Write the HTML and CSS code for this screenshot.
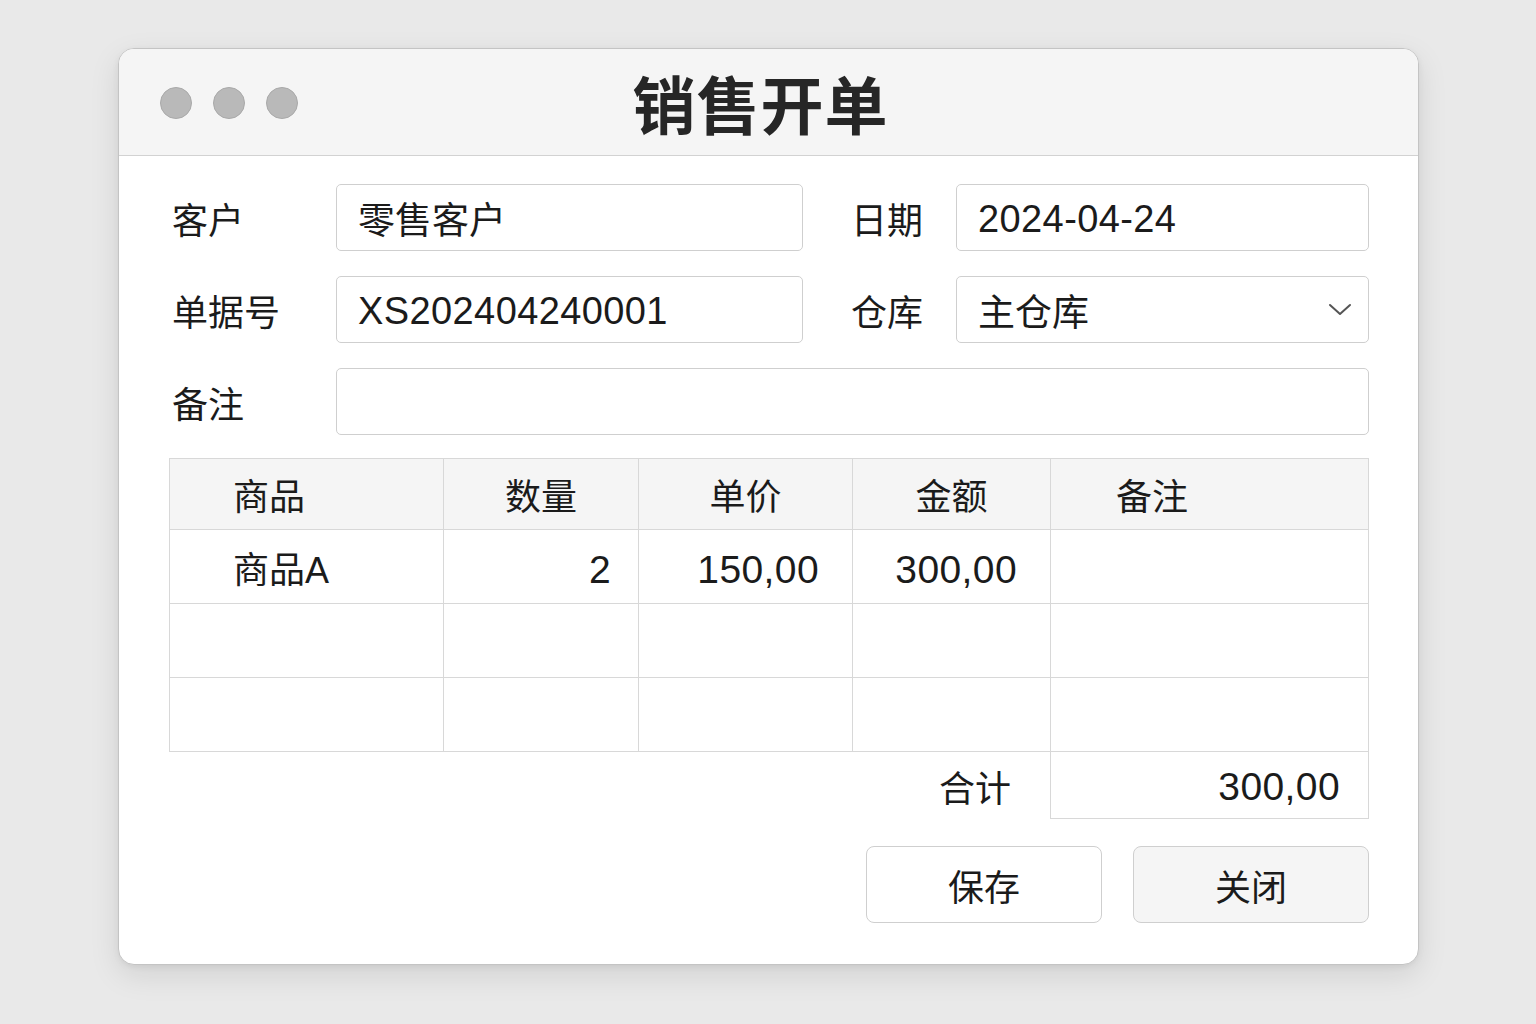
FILE: index.html
```html
<!DOCTYPE html>
<html lang="zh-CN">
<head>
<meta charset="utf-8">
<title>销售开单</title>
<link rel="stylesheet" href="styles.css">
</head>
<body>
<div class="window">
  <div class="titlebar">
    <div class="dots"><span class="dot"></span><span class="dot"></span><span class="dot"></span></div>
    <div class="title">销售开单</div>
  </div>
  <div class="content">
    <div class="form">
      <div class="label">客户</div>
      <div class="field">零售客户</div>
      <div class="spacer"></div>
      <div class="label">日期</div>
      <div class="field latin">2024-04-24</div>

      <div class="label">单据号</div>
      <div class="field latin">XS202404240001</div>
      <div class="spacer"></div>
      <div class="label">仓库</div>
      <div class="field select">主仓库
        <svg class="chev" width="24" height="14" viewBox="0 0 24 14"><path d="M2 2 L12 11 L22 2" fill="none" stroke="#555" stroke-width="2" stroke-linecap="round" stroke-linejoin="round"/></svg>
      </div>

      <div class="label">备注</div>
      <div class="field wide"></div>
    </div>

    <table class="grid">
      <colgroup>
        <col class="c1"><col class="c2"><col class="c3"><col class="c4"><col class="c5">
      </colgroup>
      <thead>
        <tr>
          <th class="left">商品</th>
          <th>数量</th>
          <th>单价</th>
          <th>金额</th>
          <th class="left">备注</th>
        </tr>
      </thead>
      <tbody>
        <tr>
          <td class="left">商品A</td>
          <td class="num n2">2</td>
          <td class="num">150,00</td>
          <td class="num">300,00</td>
          <td></td>
        </tr>
        <tr><td></td><td></td><td></td><td></td><td></td></tr>
        <tr><td></td><td></td><td></td><td></td><td></td></tr>
      </tbody>
    </table>

    <div class="total">
      <div class="total-label">合计</div>
      <div class="total-value">300,00</div>
    </div>

    <div class="buttons">
      <button class="btn">保存</button>
      <button class="btn alt">关闭</button>
    </div>
  </div>
</div>
</body>
</html>
```

FILE: styles.css
```css
* { box-sizing: border-box; }
html, body { margin: 0; padding: 0; }
body {
  background: #e9e9e9;
  width: 1536px;
  height: 1024px;
  overflow: hidden;
  font-family: "Liberation Sans", "Noto Sans CJK SC", sans-serif;
  color: #1b1b1b;
}
.window {
  margin: 48px 0 0 118px;
  width: 1301px;
  height: 917px;
  background: #fff;
  border: 1px solid #c4c4c4;
  border-radius: 16px;
  box-shadow: 0 10px 30px rgba(0,0,0,0.10), 0 2px 6px rgba(0,0,0,0.06);
  overflow: hidden;
  display: flex;
  flex-direction: column;
}
.titlebar {
  height: 107px;
  flex: none;
  background: #f5f5f5;
  border-bottom: 1px solid #d2d2d2;
  position: relative;
  display: flex;
  align-items: center;
  justify-content: center;
}
.dots {
  position: absolute;
  left: 41px;
  top: 38px;
  display: flex;
  gap: 21px;
}
.dot {
  width: 32px;
  height: 32px;
  border-radius: 50%;
  background: #b9b9b9;
  border: 1px solid #a9a9a9;
}
.title {
  font-family: "Noto Sans CJK SC", sans-serif;
  font-size: 63px;
  font-weight: 700;
  color: #262626;
  letter-spacing: 1px;
  margin-right: 16px;
  margin-bottom: 2px;
  line-height: 1;
}
.content {
  padding: 28px 49px 0 51px;
  display: flex;
  flex-direction: column;
}
.form {
  display: grid;
  grid-template-columns: 166px 467px 46px 107px 413px;
  grid-auto-rows: 67px;
  row-gap: 25px;
}
.label {
  font-family: "Noto Sans CJK SC", sans-serif;
  font-size: 36px;
  display: flex;
  align-items: center;
  padding-left: 2px;
  color: #1b1b1b;
}
.field {
  border: 1px solid #cfcfcf;
  border-radius: 5px;
  background: #fff;
  display: flex;
  align-items: center;
  padding-left: 21px;
  font-size: 37px;
  color: #1b1b1b;
  position: relative;
}
.field.latin { padding-top: 3px; font-size: 38px; letter-spacing: 0.4px; }
.field.select { justify-content: space-between; padding-right: 16px; }
.chev { display: block; }
.field.wide { grid-column: 2 / 6; }
.grid {
  margin-top: 23px;
  width: 1199px;
  margin-left: -1px;
  border-collapse: collapse;
  table-layout: fixed;
  font-size: 36px;
}
.c1 { width: 274px; }
.c2 { width: 195px; }
.c3 { width: 214px; }
.c4 { width: 198px; }
.c5 { width: 318px; }
.grid th, .grid td {
  border: 1.5px solid #d8d8d8;
  padding: 0;
}
.grid th {
  height: 71px;
  background: #f5f5f5;
  font-weight: 400;
  font-family: "Noto Sans CJK SC", sans-serif;
  text-align: center;
}
.grid td { height: 74px; }
.grid .left { text-align: left; padding-left: 63px; }
.grid th.left:last-child { padding-left: 65px; }
.grid td.num { text-align: right; padding-right: 33px; padding-top: 6px; font-size: 39px; letter-spacing: 0.4px; }
.grid td.n2 { padding-right: 27px; }
.grid td.left { font-size: 36px; }
.total {
  display: flex;
  justify-content: flex-end;
  height: 67px;
}
.total-label {
  font-family: "Noto Sans CJK SC", sans-serif;
  font-size: 36px;
  display: flex;
  align-items: center;
  padding-right: 39px;
}
.total-value {
  width: 319px;
  border: 1.5px solid #d8d8d8;
  border-top: none;
  display: flex;
  align-items: center;
  justify-content: flex-end;
  padding-right: 28px;
  padding-top: 4px;
  font-size: 39px;
  letter-spacing: 0.4px;
}
.buttons {
  margin-top: 27px;
  display: flex;
  justify-content: flex-end;
  gap: 31px;
}
.btn {
  width: 236px;
  height: 77px;
  border: 1px solid #cfcfcf;
  border-radius: 8px;
  background: #fff;
  font-family: "Noto Sans CJK SC", sans-serif;
  font-size: 36px;
  color: #1b1b1b;
  padding: 0;
}
.btn.alt { background: #f5f5f5; }
```
